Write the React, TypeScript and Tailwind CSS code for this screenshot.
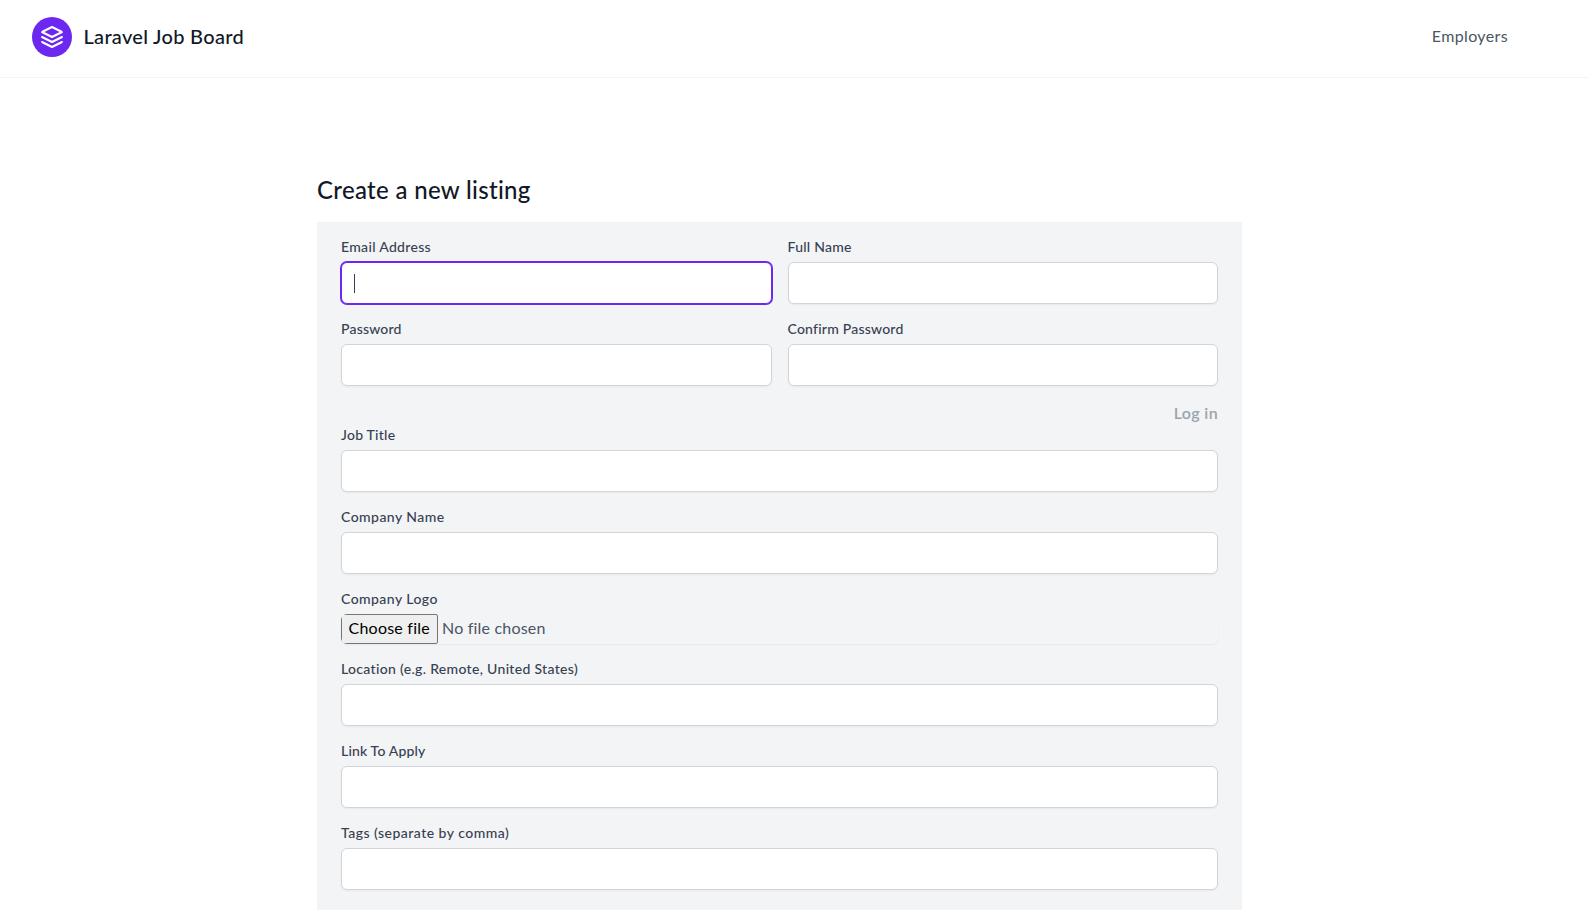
type FieldProps = {
  id: string;
  label: string;
  tracking: string;
  type?: string;
  active?: boolean;
};

const inputBase = "block h-[42px] w-full rounded-md border bg-white px-3 text-base text-[#374151] outline-none";

function Label({ htmlFor, tracking, children }: { htmlFor: string; tracking: string; children: string }) {
  return (
    <label htmlFor={htmlFor} className={`block pb-0.5 text-sm leading-[18px] font-medium whitespace-nowrap text-[#374151] ${tracking}`}>
      {children}
    </label>
  );
}

function Field({ id, label, tracking, type = "text", active = false }: FieldProps) {
  return (
    <div className="mb-4 flex-1">
      <Label htmlFor={id} tracking={tracking}>
        {label}
      </Label>
      <div className="relative mt-1">
        <input
          id={id}
          name={id}
          type={type}
          className={`${inputBase} ${active ? "border-[#6c27f1] ring-1 ring-[#6c27f1]" : "border-[#d1d5db] shadow-xs"}`}
        />
        {active && <span className="absolute top-3 left-[13px] h-[19px] w-px bg-[#374151]" />}
      </div>
    </div>
  );
}

function FileField() {
  return (
    <div className="mb-4">
      <Label htmlFor="logo" tracking="tracking-[0.44px]">
        Company Logo
      </Label>
      <div className="mt-1 flex h-[30px] items-stretch overflow-hidden rounded-md text-base leading-6 shadow-xs">
        <button
          id="logo"
          type="button"
          className="w-[97px] rounded-[2px] border border-[#767676] bg-[#efefef] pb-0.5 pl-[6.5px] text-left tracking-[0.23px] whitespace-nowrap text-black"
        >
          Choose file
        </button>
        <span className="ml-1 pt-0.5 tracking-[0.2px] text-[#4b5563]">No file chosen</span>
      </div>
    </div>
  );
}

export default function App() {
  return (
    <div className="h-[910px] overflow-hidden bg-white font-[Lato,'Open_Sans',sans-serif] text-[#4b5563]">
      <header className="flex h-[78px] items-center justify-between border-b border-[#f3f4f6] pr-[81px] pb-[3px] pl-8">
        <a className="flex items-center font-medium text-[#111827]">
          <svg
            viewBox="0 0 24 24"
            fill="none"
            stroke="currentColor"
            strokeLinecap="round"
            strokeLinejoin="round"
            strokeWidth="2"
            className="h-10 w-10 rounded-full bg-[#6c27f1] p-2 text-white"
          >
            <path d="M12 2L2 7l10 5 10-5-10-5zM2 17l10 5 10-5M2 12l10 5 10-5" />
          </svg>
          <span className="ml-[11.5px] pb-0.5 text-xl tracking-[0.3px]">Laravel Job Board</span>
        </a>
        <nav className="pb-0.5 text-base tracking-[0.37px]">
          <a>Employers</a>
        </nav>
      </header>

      <main className="ml-[317px] w-[925px] pt-24">
        <h1 className="mb-4 text-2xl leading-8 font-medium tracking-[0.32px] text-[#111827]">Create a new listing</h1>
        <form className="bg-[#f3f4f6] px-6 py-4">
          <div className="flex gap-4">
            <Field id="email" label="Email Address" tracking="tracking-[0.32px]" active />
            <Field id="name" label="Full Name" tracking="tracking-[0.25px]" />
          </div>
          <div className="flex gap-4">
            <Field id="password" label="Password" tracking="tracking-[0.2px]" type="password" />
            <Field id="password_confirmation" label="Confirm Password" tracking="tracking-[0.22px]" type="password" />
          </div>
          <div className="pb-0.5 text-right text-base leading-[22px] font-semibold tracking-[0.36px] text-[#9ca3af]">
            <a>Log in</a>
          </div>
          <Field id="title" label="Job Title" tracking="tracking-[0.24px]" />
          <Field id="company" label="Company Name" tracking="tracking-[0.45px]" />
          <FileField />
          <Field id="location" label="Location (e.g. Remote, United States)" tracking="tracking-[0.32px]" />
          <Field id="apply_link" label="Link To Apply" tracking="tracking-[0.17px]" />
          <Field id="tags" label="Tags (separate by comma)" tracking="tracking-[0.48px]" />
        </form>
      </main>
    </div>
  );
}
